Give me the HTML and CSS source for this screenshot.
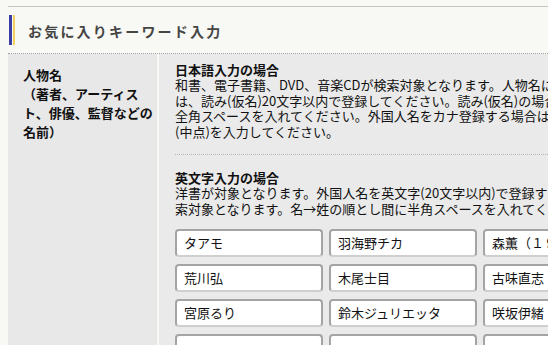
FILE: index.html
```html
<!DOCTYPE html>
<html>
<head>
  <meta charset="utf-8">
  <title>お気に入りキーワード入力</title>
  <link rel="stylesheet" href="styles.css">
</head>
<body>
  <div class="page">
    <h2 class="section-title">お気に入りキーワード入力</h2>

    <div class="form-row">
      <div class="form-label">人物名<br>（著者、アーティスト、俳優、監督などの名前）</div>
      <div class="form-body">
        <div class="note">
          <h3>日本語入力の場合</h3>
          <p>和書、電子書籍、DVD、音楽CDが検索対象となります。人物名につい<br>は、読み(仮名)20文字以内で登録してください。読み(仮名)の場合は姓と名の間に<br>全角スペースを入れてください。外国人名をカナ登録する場合は姓と名の間に・<br>(中点)を入力してください。</p>
        </div>
        <div class="note note-sep">
          <h3>英文字入力の場合</h3>
          <p>洋書が対象となります。外国人名を英文字(20文字以内)で登録すると検<br>索対象となります。名→姓の順とし間に半角スペースを入れてください。</p>
        </div>
        <div class="keyword-grid">
          <input type="text" class="keyword" value="タアモ">
          <input type="text" class="keyword" value="羽海野チカ">
          <input type="text" class="keyword" value="森薫（１９７８）">
          <input type="text" class="keyword" value="荒川弘">
          <input type="text" class="keyword" value="木尾士目">
          <input type="text" class="keyword" value="古味直志">
          <input type="text" class="keyword" value="宮原るり">
          <input type="text" class="keyword" value="鈴木ジュリエッタ">
          <input type="text" class="keyword" value="咲坂伊緒">
          <input type="text" class="keyword" value="">
          <input type="text" class="keyword" value="">
          <input type="text" class="keyword" value="">
          <input type="text" class="keyword" value="">
          <input type="text" class="keyword" value="">
          <input type="text" class="keyword" value="">
        </div>
      </div>
    </div>
  </div>
</body>
</html>
```

FILE: styles.css
```css
body {
  margin: 0;
  overflow: hidden;
  background-color: #f8f8f4;
  color: #111;
  font-family: "Noto Sans CJK JP", "Liberation Sans", sans-serif;
  font-size: 13px;
}
.page { /* wider than the window, right side is cut off */
  width: 760px;
  margin: 6px 0 0 8px;
  border-top: 1px solid #c6c6c6;
}

.section-title {
  margin: 8px 0 8px 1px;
  height: 30px;
  line-height: 32px;
  padding-left: 19px;
  font-size: 14px;
  font-weight: bold;
  letter-spacing: 2.2px;
  color: #454545;
  background: linear-gradient(to right, #3c3ca6 0 3px, transparent 3px 4px, #efd15c 4px 6px, transparent 6px) no-repeat;
}

.form-row {
  display: flex;
  gap: 2px;
  border-top: 1px dotted #a0a0a0;
}
.form-label {
  width: 132px;
  flex-shrink: 0;
  padding: 11px 2px 0 15px;
  background-color: #e8e8e8;
  font-weight: bold;
  line-height: 19px;
}
.form-body {
  flex: 1;
  padding: 9px 16px 20px 16px;
  background-color: #eaeaea;
}

.note h3 {
  margin: 0;
  font-size: 13px;
  line-height: 14px;
}
.note p {
  margin: 0;
  line-height: 15.6px;
  white-space: nowrap;
}
.note-sep {
  margin-top: 15px;
  padding-top: 16px;
  border-top: 1px dotted #b4b4b4;
}

.keyword-grid {
  display: grid;
  grid-template-columns: repeat(3, 148px);
  column-gap: 6px;
  row-gap: 7px;
  margin-top: 12px;
}
.keyword {
  box-sizing: border-box;
  height: 28px;
  margin: 0;
  padding: 0 7px;
  border: 2px solid #a4a4a4;
  border-bottom-color: #cfcfcf;
  border-radius: 4px;
  background-color: #fff;
  color: #111;
  font-family: "Noto Sans CJK JP", sans-serif;
  font-size: 13px;
}
```
